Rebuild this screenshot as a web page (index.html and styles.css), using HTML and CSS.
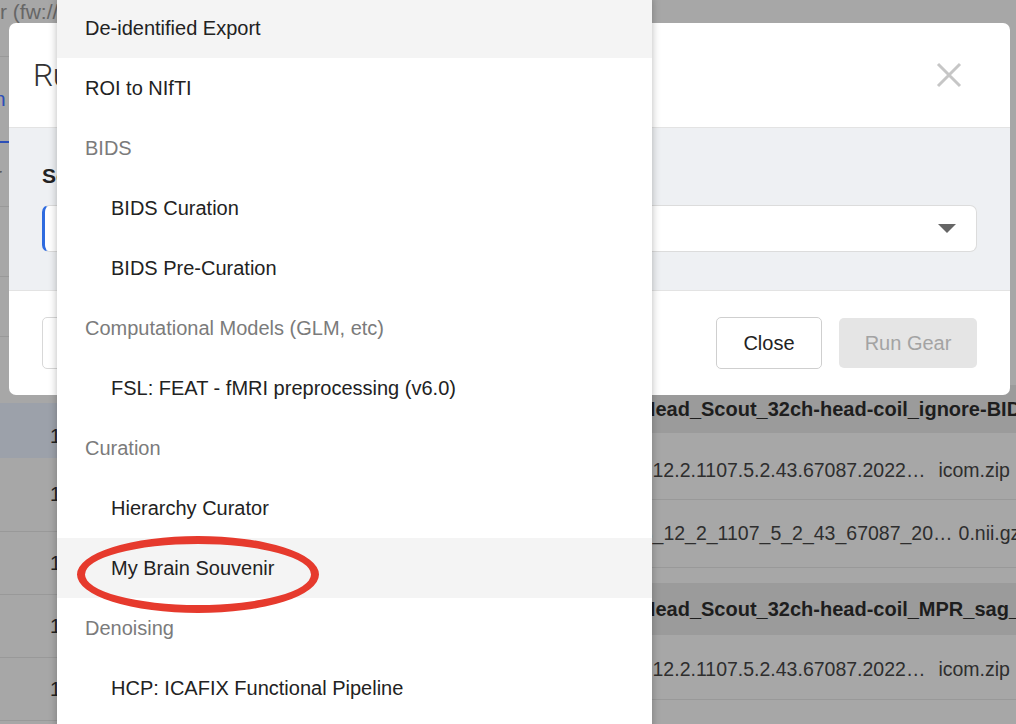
FILE: index.html
```html
<!DOCTYPE html>
<html lang="en">
<head>
<meta charset="utf-8">
<title>Run Gear</title>
<link rel="stylesheet" href="styles.css">
</head>
<body>
<div class="page">
  <div class="col-left">
    <div class="lrow lrow-top"><span class="crumb">r (fw://flywheel)</span></div>
    <div class="lrow lrow-tab"><span class="tab">n</span></div>
    <div class="lrow lrow-a"><span class="faint">r</span></div>
    <div class="lrow lrow-b"></div>
    <div class="lrow lrow-c"></div>
    <div class="lrow lrow-d"></div>
    <div class="lrow lrow-sel"><span class="num">1</span></div>
    <div class="lrow lrow-e"><span class="num">1</span></div>
    <div class="lrow lrow-f"><span class="num">1</span></div>
    <div class="lrow lrow-f"><span class="num">1</span></div>
    <div class="lrow lrow-f"><span class="num">1</span></div>
  </div>
  <div class="col-right">
    <div class="rspacer"></div>
    <div class="rrow rband"><span class="rtext bold">Head_Scout_32ch-head-coil_ignore-BIDS</span></div>
    <div class="rrow rfile"><span class="rtext">1.3.12.2.1107.5.2.43.67087.2022…<span class="gap"></span>icom.zip</span></div>
    <div class="rrow rfile2"><span class="rtext">1_3_12_2_1107_5_2_43_67087_20…<span class="gap-s"></span>0.nii.gz</span></div>
    <div class="rgap"></div>
    <div class="rrow rband2"><span class="rtext bold">Head_Scout_32ch-head-coil_MPR_sag_i</span></div>
    <div class="rrow rfile3"><span class="rtext">1.3.12.2.1107.5.2.43.67087.2022…<span class="gap"></span>icom.zip</span></div>
    <div class="rrow rlast"></div>
  </div>
</div>

<div class="modal">
  <div class="modal-header">
    <h2 class="modal-title">Run Gear</h2>
    <svg class="close-x" width="26" height="26" viewBox="0 0 26 26" aria-hidden="true">
      <path d="M2 2 L24 24 M24 2 L2 24" stroke="#c6c6c6" stroke-width="3" fill="none"/>
    </svg>
  </div>
  <div class="modal-body">
    <div class="field-label">Select a gear</div>
    <div class="select">
      <span class="select-text"></span>
      <svg class="caret" width="18" height="10" viewBox="0 0 18 10" aria-hidden="true">
        <path d="M0 0 H18 L9 9 Z" fill="#666"/>
      </svg>
    </div>
  </div>
  <div class="modal-footer">
    <button class="btn btn-ghost">Advanced</button>
    <div class="spacer"></div>
    <button class="btn btn-close">Close</button>
    <button class="btn btn-run">Run Gear</button>
  </div>
</div>

<ul class="menu">
  <li class="opt top hover">De-identified Export</li>
  <li class="opt top">ROI to NIfTI</li>
  <li class="group">BIDS</li>
  <li class="opt">BIDS Curation</li>
  <li class="opt">BIDS Pre-Curation</li>
  <li class="group">Computational Models (GLM, etc)</li>
  <li class="opt">FSL: FEAT - fMRI preprocessing (v6.0)</li>
  <li class="group">Curation</li>
  <li class="opt">Hierarchy Curator</li>
  <li class="opt hover">My Brain Souvenir</li>
  <li class="group">Denoising</li>
  <li class="opt">HCP: ICAFIX Functional Pipeline</li>
</ul>

<div class="annotation" aria-hidden="true"></div>
</body>
</html>
```

FILE: styles.css
```css
* { box-sizing: border-box; }

html, body {
  margin: 0;
  padding: 0;
  width: 1016px;
  height: 724px;
  overflow: hidden;
}

body {
  background: #a7a7a7;
  font-family: "Liberation Sans", Arial, sans-serif;
  color: #222;
  position: relative;
}

/* ---------- dimmed background page ---------- */
.page {
  display: flex;
  height: 724px;
}

.col-left {
  width: 57px;
  flex: none;
  display: flex;
  flex-direction: column;
}

.lrow {
  border-bottom: 1px solid #999;
  position: relative;
  display: flex;
  align-items: center;
  justify-content: flex-end;
  overflow: hidden;
}

.lrow-top {
  height: 57px;
  align-items: flex-start;
  justify-content: flex-start;
}

.crumb {
  font-size: 21px;
  color: #666;
  white-space: nowrap;
  line-height: 24px;
}

.lrow-tab {
  height: 86px;
  border-bottom: 2px solid #2d4fb8;
  justify-content: flex-start;
}

.tab {
  color: #2d4fb8;
  font-size: 21px;
  margin-left: -6px;
}

.lrow-a {
  height: 64px;
  justify-content: flex-start;
}

.faint {
  color: #555;
  font-size: 21px;
  margin-left: -5px;
}

.lrow-b { height: 70px; }
.lrow-c { height: 60px; }
.lrow-d { height: 66px; border-bottom: none; }

.lrow-sel {
  height: 55px;
  background: #9ca1aa;
  border-bottom: none;
  align-items: flex-end;
  padding-bottom: 10px;
}

.lrow-e { height: 74px; }
.lrow-f { height: 63px; }

.num {
  font-size: 20px;
  color: #222;
  margin-right: -4px;
}

.col-right {
  flex: 1;
  display: flex;
  flex-direction: column;
  overflow: hidden;
}

.rspacer { height: 385px; flex: none; }

.rrow {
  flex: none;
  display: flex;
  align-items: center;
  white-space: nowrap;
  overflow: hidden;
}

.rtext {
  font-size: 19.5px;
  color: #2e2e2e;
}

.rtext.bold {
  font-size: 20px;
  font-weight: bold;
  color: #1e1e1e;
}

.gap {
  display: inline-block;
  width: 13px;
}

.gap-s {
  display: inline-block;
  width: 6px;
}

.rband {
  height: 48px;
  padding-left: 584px;
  background: #9b9b9b;
}

.rfile {
  height: 67px;
  padding-left: 563px;
  padding-top: 8px;
  border-bottom: 1px solid #999;
}

.rfile2 {
  height: 68px;
  padding-left: 563px;
  border-bottom: 1px solid #999;
}

.rgap { height: 15px; flex: none; }

.rband2 {
  height: 52px;
  padding-left: 584px;
  background: #9b9b9b;
}

.rfile3 {
  height: 65px;
  padding-left: 563px;
  padding-top: 4px;
  border-bottom: 1px solid #999;
}

.rlast { height: 30px; }

/* ---------- modal ---------- */
.modal {
  position: absolute;
  left: 9px;
  top: 23px;
  width: 1001px;
  height: 372px;
  background: #fff;
  border-radius: 7px;
  overflow: hidden;
  display: flex;
  flex-direction: column;
}

.modal-header {
  height: 105px;
  flex: none;
  display: flex;
  align-items: center;
  justify-content: space-between;
  padding: 0 48px 0 24px;
  border-bottom: 1px solid #e3e3e3;
}

.modal-title {
  margin: 0;
  font-family: Roboto, "Liberation Sans", sans-serif;
  font-weight: 300;
  font-size: 32px;
  letter-spacing: -0.5px;
  color: #333;
}

.close-x { display: block; }

.modal-body {
  height: 163px;
  flex: none;
  background: #eef0f3;
  padding: 36px 33px 0;
  border-bottom: 1px solid #e3e3e3;
}

.field-label {
  font-size: 21px;
  font-weight: bold;
  line-height: 24px;
  color: #222;
}

.select {
  margin-top: 17px;
  height: 47px;
  background: #fff;
  border: 1px solid #dcdcdc;
  border-left: 3px solid #2f6bdf;
  border-radius: 7px;
  display: flex;
  align-items: center;
  justify-content: flex-end;
  padding-right: 20px;
}

.caret { display: block; }

.modal-footer {
  flex: 1;
  display: flex;
  align-items: center;
  padding: 0 33px;
  gap: 17px;
}

.spacer { flex: 1; }

.btn {
  height: 52px;
  font-family: "Liberation Sans", Arial, sans-serif;
  font-size: 20px;
  border-radius: 5px;
  padding: 0;
  white-space: nowrap;
}

.btn-ghost {
  background: #fff;
  border: 1px solid #d8d8d8;
  color: #333;
  padding: 0 26px;
}

.btn-close {
  width: 106px;
  background: #fff;
  border: 1px solid #cfcfcf;
  color: #222;
}

.btn-run {
  width: 138px;
  height: 50px;
  background: #e5e5e5;
  border: none;
  color: #a3a3a3;
}

/* ---------- dropdown menu ---------- */
.menu {
  position: absolute;
  left: 57px;
  top: -2px;
  width: 595px;
  height: 740px;
  margin: 0;
  padding: 0;
  list-style: none;
  background: #fff;
  box-shadow: 0 0 8px rgba(0, 0, 0, 0.28);
  overflow: hidden;
}

.menu li {
  height: 60px;
  display: flex;
  align-items: center;
  font-size: 20px;
  white-space: nowrap;
}

.opt {
  padding-left: 54px;
  color: #222;
}

.opt.top { padding-left: 28px; }

.group {
  padding-left: 28px;
  color: #7b7b7b;
}

.hover { background: #f4f4f4; }

/* ---------- red annotation ---------- */
.annotation {
  position: absolute;
  left: 77px;
  top: 536px;
  width: 242px;
  height: 77px;
  border: 8px solid #e63a2d;
  border-radius: 50%;
}
```
